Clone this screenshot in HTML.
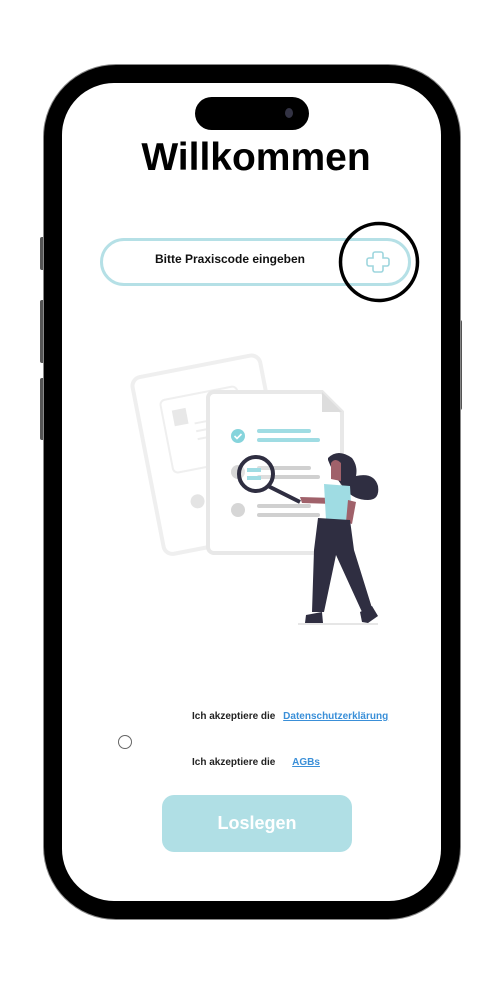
<!DOCTYPE html>
<html><head><meta charset="utf-8"><style>
html,body{margin:0;padding:0;background:#fff;}
body{width:495px;height:983px;position:relative;overflow:hidden;font-family:"Liberation Sans",sans-serif;}
.abs{position:absolute;}
</style></head><body>
<div class="abs" style="left:40px;top:237px;width:6px;height:33px;background:#555;border-radius:2px"></div>
<div class="abs" style="left:40px;top:300px;width:6px;height:63px;background:#555;border-radius:2px"></div>
<div class="abs" style="left:40px;top:378px;width:6px;height:62px;background:#555;border-radius:2px"></div>
<div class="abs" style="left:456px;top:320px;width:6px;height:90px;background:#555;border-radius:2px"></div>
<div class="abs" style="left:44px;top:65px;width:416px;height:854px;border-radius:72px;background:#000;box-shadow:0 0 0 1px #888"></div>
<div class="abs" style="left:62px;top:83px;width:379px;height:818px;border-radius:52px;background:#fff"></div>
<div class="abs" style="left:195px;top:97px;width:114px;height:33px;border-radius:17px;background:#000"></div>
<div class="abs" style="left:285px;top:108px;width:8px;height:10px;border-radius:50%;background:#334"></div>

<div class="abs" style="left:62px;top:136px;width:388px;text-align:center;font-size:39px;font-weight:bold;color:#000">Willkommen</div>

<div class="abs" style="left:100px;top:238px;width:305px;height:42px;border:3.5px solid #b5e0e6;border-radius:25px"></div>
<div class="abs" style="left:100px;top:252px;width:260px;text-align:center;font-size:12px;font-weight:bold;color:#111">Bitte Praxiscode eingeben</div>
<svg class="abs" style="left:330px;top:215px" width="100" height="95" viewBox="330 215 100 95">
<path d="M375 252 h6 a2 2 0 0 1 2 2 v4 h4 a2 2 0 0 1 2 2 v4 a2 2 0 0 1 -2 2 h-4 v4 a2 2 0 0 1 -2 2 h-6 a2 2 0 0 1 -2 -2 v-4 h-4 a2 2 0 0 1 -2 -2 v-4 a2 2 0 0 1 2 -2 h4 v-4 a2 2 0 0 1 2 -2z" fill="none" stroke="#9ed6de" stroke-width="1.6"/>
<circle cx="379" cy="262" r="38.5" fill="none" stroke="#000" stroke-width="3.5"/>
</svg>

<svg class="abs" style="left:0;top:0" width="495" height="983" viewBox="0 0 495 983">
<g transform="rotate(-11 210 450)">
<rect x="146" y="365" width="130" height="180" rx="9" fill="none" stroke="#efefef" stroke-width="4"/>
<rect x="170" y="392" width="78" height="74" rx="5" fill="none" stroke="#efefef" stroke-width="2"/>
<rect x="180" y="404" width="14" height="16" fill="#e8e8e8"/>
<rect x="200" y="420" width="30" height="2" fill="#eee"/><rect x="200" y="428" width="30" height="2" fill="#eee"/><rect x="200" y="436" width="30" height="2" fill="#eee"/>
<circle cx="188" cy="498" r="7" fill="#e4e4e4"/>
</g>
<path d="M214 392 H322 L342 412 V547 a6 6 0 0 1 -6 6 H214 a6 6 0 0 1 -6 -6 V398 a6 6 0 0 1 6 -6z" fill="#fff" stroke="#e8e8e8" stroke-width="4"/>
<path d="M322 392 L342 412 H322z" fill="#ddd"/>
<circle cx="238" cy="436" r="7" fill="#86d4dc"/>
<path d="M234.5 436 l2.5 2.5 l4.5 -4.5" stroke="#fff" stroke-width="1.6" fill="none"/>
<rect x="257" y="429" width="54" height="4" rx="2" fill="#9fdce3"/>
<rect x="257" y="438" width="63" height="4" rx="2" fill="#9fdce3"/>
<circle cx="238" cy="472" r="7" fill="#d6d6d6"/>
<rect x="257" y="466" width="54" height="4" rx="2" fill="#d0d0d0"/>
<rect x="257" y="475" width="63" height="4" rx="2" fill="#d0d0d0"/>
<circle cx="238" cy="510" r="7" fill="#d6d6d6"/>
<rect x="257" y="504" width="54" height="4" rx="2" fill="#d0d0d0"/>
<rect x="257" y="513" width="63" height="4" rx="2" fill="#d0d0d0"/>
<circle cx="256" cy="474" r="17" fill="#fff" fill-opacity="0.3" stroke="#2f2e41" stroke-width="4"/>
<rect x="247" y="468" width="14" height="4" fill="#9fdce3"/><rect x="247" y="476" width="14" height="4" fill="#9fdce3"/>
<path d="M268 486 L300 502" stroke="#2f2e41" stroke-width="4"/>
<path d="M300 497 L334 498 L334 504 L302 503z" fill="#a0616a"/>
<path d="M328 458 q10 -10 24 0 q6 8 4 18 q18 -4 22 10 q2 14 -10 14 q-14 0 -22 -10 q-10 -10 -18 -30z" fill="#2f2e41"/>
<path d="M331 463 q4 -6 10 0 l0 18 l-10 -2z" fill="#a0616a"/>
<path d="M324 484 L350 486 L352 520 L326 520z" fill="#9fdce3"/>
<path d="M348 500 L356 502 L352 524 L346 522z" fill="#a0616a"/>
<path d="M318 518 L350 520 L354 550 L372 608 L362 612 L336 555 L324 612 L312 612 L314 550z" fill="#2f2e41"/>
<path d="M306 615 L322 612 L323 623 L305 623z" fill="#2f2e41"/>
<path d="M360 612 L372 606 L378 616 L368 623 L362 622z" fill="#2f2e41"/>
<path d="M298 624 H378" stroke="#ccc" stroke-width="1"/>
</svg>

<div class="abs" style="left:118px;top:735px;width:12px;height:12px;border:1.7px solid #666;border-radius:50%"></div>
<div class="abs" style="left:192px;top:711px;font-size:10px;font-weight:bold;color:#222">Ich akzeptiere die <span style="margin-left:5px;color:#3a8fd8;text-decoration:underline">Datenschutzerklärung</span></div>
<div class="abs" style="left:192px;top:757px;font-size:10px;font-weight:bold;color:#222">Ich akzeptiere die <span style="margin-left:14px;color:#3a8fd8;text-decoration:underline">AGBs</span></div>

<div class="abs" style="left:162px;top:795px;width:190px;height:57px;border-radius:12px;background:#b0dfe5;color:#fff;font-size:18px;font-weight:bold;text-align:center;line-height:57px">Loslegen</div>
</body></html>
